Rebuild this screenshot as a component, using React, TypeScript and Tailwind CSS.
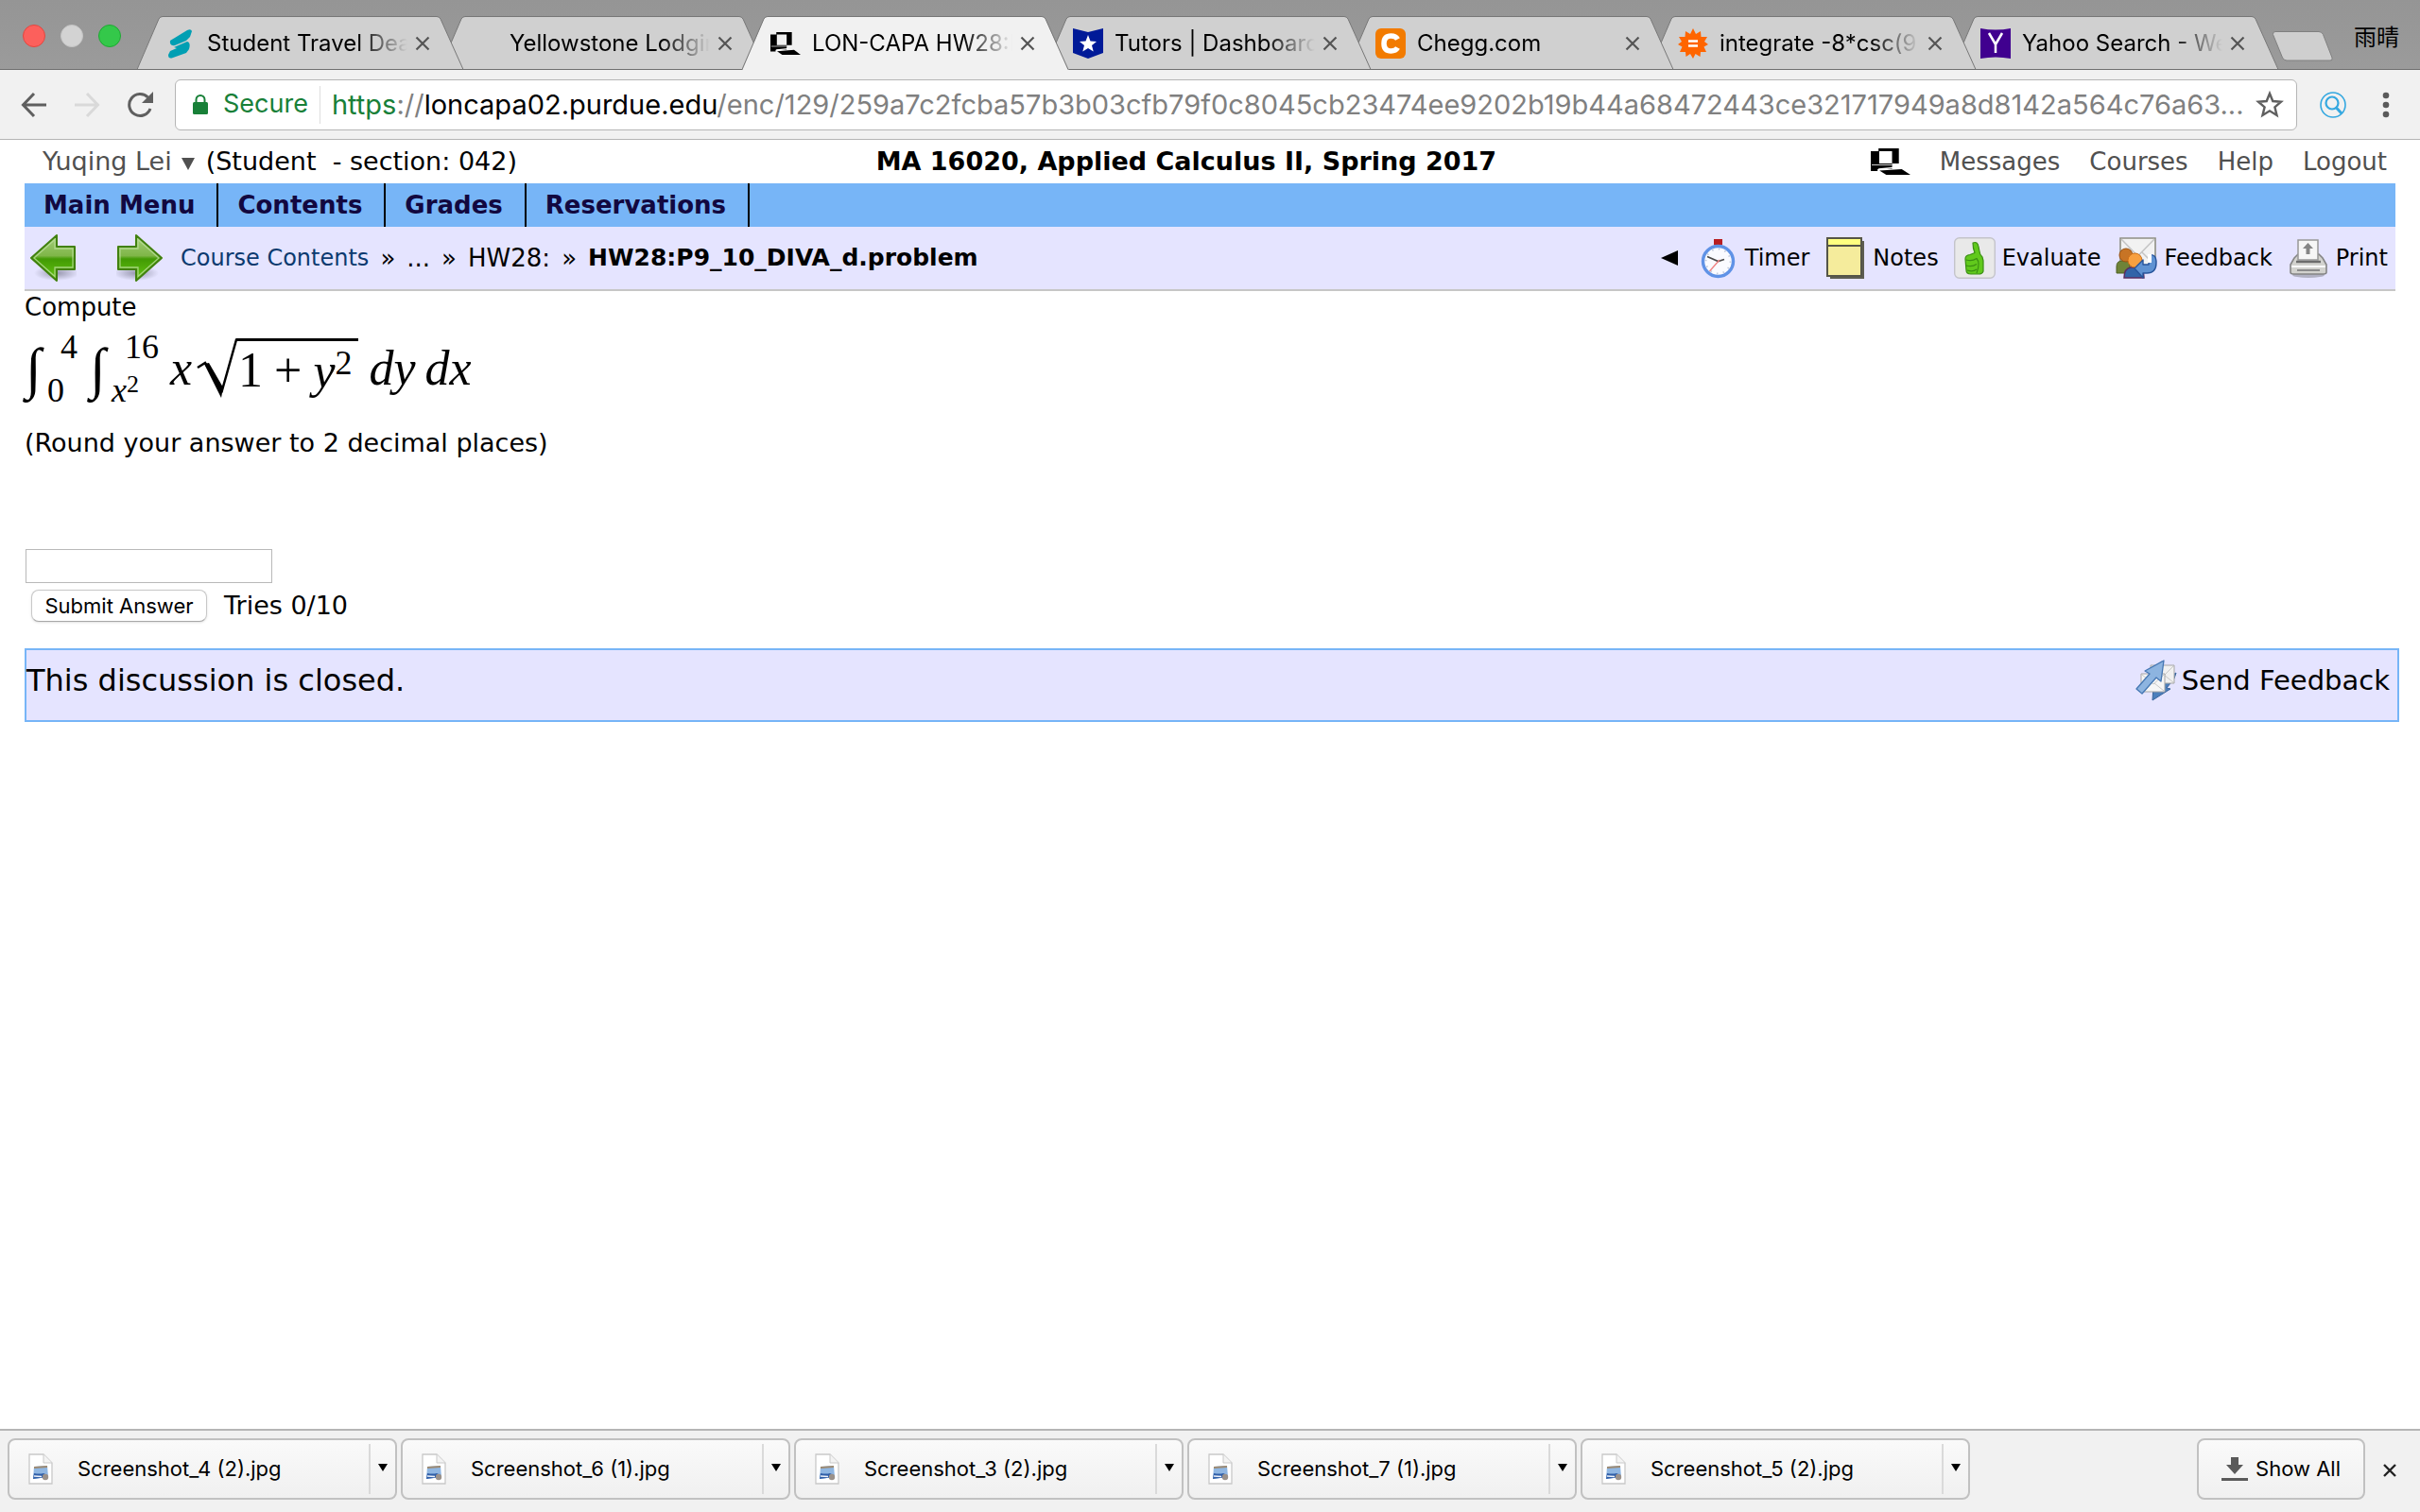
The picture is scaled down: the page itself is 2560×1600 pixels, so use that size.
import React from "react";
import type { ReactNode } from "react";

type Tab = { title: string; icon?: ReactNode; active?: boolean };

const tabs: Tab[] = [
  { title: "Student Travel Dea", icon: <StudentIcon /> },
  { title: "Yellowstone Lodgin" },
  { title: "LON-CAPA HW28:P", icon: <LonCapaIcon className="h-6 w-8" />, active: true },
  { title: "Tutors | Dashboard", icon: <TutorsIcon /> },
  { title: "Chegg.com", icon: <CheggIcon /> },
  { title: "integrate -8*csc(9", icon: <WolframIcon /> },
  { title: "Yahoo Search - We", icon: <YahooIcon /> },
];

const stacking = ["z-[7]", "z-[6]", "z-[8]", "z-[5]", "z-[4]", "z-[3]", "z-[2]"];

const menu = ["Main Menu", "Contents", "Grades", "Reservations"];

const userLinks = ["Messages", "Courses", "Help", "Logout"];

const tools = [
  { label: "Timer", icon: <TimerIcon /> },
  { label: "Notes", icon: <NotesIcon /> },
  { label: "Evaluate", icon: <EvaluateIcon /> },
  { label: "Feedback", icon: <FeedbackIcon /> },
  { label: "Print", icon: <PrintIcon /> },
];

const downloads = [
  "Screenshot_4 (2).jpg",
  "Screenshot_6 (1).jpg",
  "Screenshot_3 (2).jpg",
  "Screenshot_7 (1).jpg",
  "Screenshot_5 (2).jpg",
];

export default function App() {
  return (
    <div className="flex min-h-screen flex-col bg-white font-['Inter','Noto_Sans_CJK_SC',sans-serif] text-black">
      <TabStrip />
      <Toolbar />
      <div className="flex-1 pr-[26px] pl-[26px] font-['DejaVu_Sans',Verdana,sans-serif] text-[26px]">
        <CourseHeader />
        <Problem />
      </div>
      <DownloadShelf />
    </div>
  );
}

/* ---------------- browser chrome ---------------- */

function TabStrip() {
  return (
    <div className="flex h-[74px] items-stretch border-b border-[#6f6f6f] bg-gradient-to-b from-[#959595] to-[#9b9b9b] pr-[22px] pl-6">
      <div className="mt-[26px] mr-[17px] flex h-6 gap-4">
        <button aria-label="Close window" className="h-6 w-6 rounded-full border border-[#e2463f] bg-[#fc605c]" />
        <button aria-label="Minimize window" className="h-6 w-6 rounded-full border border-[#c4c4c4] bg-[#d3d3d3]" />
        <button aria-label="Zoom window" className="h-6 w-6 rounded-full border border-[#1fa833] bg-[#34c84a]" />
      </div>
      <ul className="mt-[17px] -mb-px flex min-w-0">
        {tabs.map((tab, i) => (
          <TabItem key={tab.title} tab={tab} z={stacking[i]} />
        ))}
      </ul>
      <button aria-label="New tab" className="mt-8 ml-[18px] h-[34px] w-[66px]">
        <svg viewBox="0 0 66 34" className="h-full w-full">
          <path d="M4 1.500H50Q53 1.500 54.500 4.500L64 29Q65 32 62 32H16Q13 32 11.500 29L1.500 4.500Q1 1.500 4 1.500Z" fill="#cfcfcf" stroke="#808080" />
        </svg>
      </button>
      <span className="mt-6 ml-auto text-2xl leading-8 whitespace-nowrap">雨晴</span>
    </div>
  );
}

function TabItem({ tab, z }: { tab: Tab; z: string }) {
  return (
    <li className={"relative flex h-[57px] w-[320px] min-w-0 items-center pl-[30px] " + z}>
      <svg viewBox="0 0 346 57" preserveAspectRatio="none" className="absolute top-0 left-0 h-[57px] w-[346px]">
        <path
          d={tab.active ? "M0 57L1 56 23 3Q24.500 .5 27 .5H317Q319.500 .5 321 3L344 56 346 57Z" : "M0 56L23 3Q24.500 .5 27 .5H317Q319.500 .5 321 3L345 56Z"}
          fill={tab.active ? "#f1f1f1" : "#d0d0d0"}
        />
        <path d="M0 56.500L23 3Q24.500 .5 27 .5H317Q319.500 .5 321 3L345 56.500" fill="none" stroke="#777" />
      </svg>
      <span className="relative flex h-8 w-8 shrink-0 items-center justify-center">{tab.icon}</span>
      <a
        href="#tab"
        className="relative ml-3 w-[212px] shrink-0 overflow-hidden bg-gradient-to-r from-black from-75% to-transparent bg-clip-text text-2xl leading-8 whitespace-nowrap text-transparent"
      >
        {tab.title}
      </a>
      <button aria-label={"Close " + tab.title} className="relative ml-2 h-4 w-4 shrink-0">
        <svg viewBox="0 0 16 16" className="h-4 w-4">
          <path d="M1.500 1.500L14.500 14.500M14.500 1.500L1.500 14.500" stroke="#555" strokeWidth="2.200" />
        </svg>
      </button>
    </li>
  );
}

function Toolbar() {
  return (
    <div className="flex h-[74px] items-center border-b border-[#b5b5b5] bg-[#f1f1f1] pr-8 pl-[22px]">
      <button aria-label="Back" className="h-7 w-7">
        <svg viewBox="0 0 28 28" className="h-7 w-7" fill="none" stroke="#5f5f5f" strokeWidth="3">
          <path d="M27 14H3M14 2L2.500 14 14 26" />
        </svg>
      </button>
      <button aria-label="Forward" className="ml-7 h-7 w-7">
        <svg viewBox="0 0 28 28" className="h-7 w-7" fill="none" stroke="#d9d9d9" strokeWidth="3">
          <path d="M1 14H25M14 2L25.500 14 14 26" />
        </svg>
      </button>
      <button aria-label="Reload" className="ml-7 h-7 w-7">
        <svg viewBox="0 0 28 28" className="h-7 w-7">
          <path d="M25 18A11.500 11.500 0 1 1 22.500 6" fill="none" stroke="#5f5f5f" strokeWidth="3" />
          <path d="M28 0V12H16Z" fill="#5f5f5f" />
        </svg>
      </button>
      <div className="ml-[23px] flex h-[54px] min-w-0 flex-1 items-center rounded-md border border-[#b5b5b5] bg-white pr-3 pl-[17px]">
        <svg viewBox="0 0 18 24" className="h-6 w-[18px] shrink-0">
          <rect x="1" y="9" width="16" height="13" rx="1.500" fill="#188038" />
          <path d="M4.500 10V6.500A4.500 4.500 0 0 1 13.500 6.500V10" fill="none" stroke="#188038" strokeWidth="2" />
        </svg>
        <span className="ml-[15px] text-[27px] text-[#188038]">Secure</span>
        <span className="mx-3 h-10 w-px shrink-0 bg-[#dedede]" />
        <span className="min-w-0 flex-1 truncate text-[29px] text-[#808080]">
          <span className="text-[#188038]">https</span>://<span className="text-black">loncapa02.purdue.edu</span>
          /enc/129/259a7c2fcba57b3b03cfb79f0c8045cb23474ee9202b19b44a68472443ce321717949a8d8142a564c76a63...
        </span>
        <button aria-label="Bookmark" className="h-8 w-8 shrink-0">
          <svg viewBox="0 0 32 32" className="h-8 w-8">
            <path d="M16 4L19.300 12 28 12.700 21.400 18.400 23.500 27 16 22.300 8.500 27 10.600 18.400 4 12.700 12.700 12Z" fill="none" stroke="#5f5f5f" strokeWidth="2.400" />
          </svg>
        </button>
      </div>
      <button aria-label="Search extension" className="ml-6 h-7 w-7">
        <svg viewBox="0 0 28 28" className="h-7 w-7" fill="none" stroke="#35a8e0">
          <circle cx="14" cy="14" r="13" strokeWidth="1.600" />
          <circle cx="13" cy="12" r="6.500" strokeWidth="2.200" />
          <path d="M17.500 17L23 23" strokeWidth="3" />
        </svg>
      </button>
      <button aria-label="Menu" className="ml-[38px] h-7 w-2">
        <svg viewBox="0 0 8 28" className="h-7 w-2" fill="#5a5a5a">
          <circle cx="4" cy="4" r="3.300" />
          <circle cx="4" cy="14" r="3.300" />
          <circle cx="4" cy="24" r="3.300" />
        </svg>
      </button>
    </div>
  );
}

function DownloadShelf() {
  return (
    <div className="flex h-[88px] items-start gap-1 border-t-2 border-[#b5b5b5] bg-[#f1f1f1] px-2 pt-2 text-[22px]">
      {downloads.map((name) => (
        <div key={name} className="flex h-[65px] w-[412px] rounded-lg border-2 border-[#c1c1c1] bg-gradient-to-b from-[#fafafa] to-[#f0f0f0]">
          <button className="flex min-w-0 flex-1 items-center pl-5">
            <FileIcon />
            <span className="ml-[26px] truncate">{name}</span>
          </button>
          <button aria-label={"Options for " + name} className="my-1 flex w-7 items-center justify-center border-l-2 border-[#dadada] pb-1">
            <svg viewBox="0 0 10 14" className="h-[14px] w-[10px]">
              <path d="M0 3H10L5 11Z" />
            </svg>
          </button>
        </div>
      ))}
      <button className="ml-auto flex h-[65px] items-center rounded-lg border-2 border-[#c1c1c1] bg-gradient-to-b from-[#fafafa] to-[#f0f0f0] px-6">
        <svg viewBox="0 0 28 26" className="h-[26px] w-7" fill="#5a5a5a">
          <path d="M10 0H18V8H23L14 18 5 8H10ZM0 22H28V25H0Z" />
        </svg>
        <span className="ml-2">Show All</span>
      </button>
      <button aria-label="Close downloads" className="mt-[26px] mr-4 ml-[14px] h-4 w-4">
        <svg viewBox="0 0 16 16" className="h-4 w-4">
          <path d="M2 2L14 14M14 2L2 14" stroke="#222" strokeWidth="2.400" />
        </svg>
      </button>
    </div>
  );
}

/* ---------------- course page ---------------- */

function CourseHeader() {
  return (
    <header>
      <div className="flex h-[46px] items-center justify-between pr-[9px] pl-[19px]">
        <div className="flex items-center text-[27px] whitespace-pre">
          <a href="#user" className="flex items-center text-[#505050]">
            Yuqing Lei
            <svg viewBox="0 0 14 14" className="mt-1 ml-[10px] h-[14px] w-[14px]" fill="#505050">
              <path d="M0 1H14L7 14Z" />
            </svg>
          </a>
          <span className="ml-3">(Student  - section: 042)</span>
        </div>
        <h1 className="mr-4 text-[27px] font-bold">MA 16020, Applied Calculus II, Spring 2017</h1>
        <nav className="flex items-center gap-[31px] text-[#505050]">
          <LonCapaIcon className="h-7 w-[42px]" />
          {userLinks.map((link) => (
            <a key={link} href="#user">{link}</a>
          ))}
        </nav>
      </div>
      <nav className="flex h-[46px] bg-[#77b5f7] font-bold text-[#120840]">
        {menu.map((item) => (
          <a key={item} href="#menu" className="flex items-center border-r-2 border-black pr-[23px] pl-5">{item}</a>
        ))}
      </nav>
      <div className="flex h-[68px] items-center border-b-2 border-[#c6c6c6] bg-[#e5e4ff] pr-2 pl-[5px]">
        <a href="#previous" aria-label="Previous"><ArrowIcon /></a>
        <a href="#next" aria-label="Next" className="ml-[42px]"><ArrowIcon flip /></a>
        <div className="ml-[18px] flex items-center gap-3">
          <a href="#contents" className="text-2xl text-[#0b3a6f]">Course Contents</a>
          <span>»</span>
          <span>...</span>
          <span>»</span>
          <span>HW28:</span>
          <span>»</span>
          <b className="text-[25px]">HW28:P9_10_DIVA_d.problem</b>
        </div>
        <div className="ml-auto flex items-center gap-4 text-2xl">
          <button aria-label="Collapse tools" className="mr-1">
            <svg viewBox="0 0 18 16" className="h-4 w-[18px]">
              <path d="M18 0V16L0 8Z" />
            </svg>
          </button>
          {tools.map((tool) => (
            <a key={tool.label} href="#tool" className="flex items-center gap-[7px]">
              {tool.icon}
              {tool.label}
            </a>
          ))}
        </div>
      </div>
    </header>
  );
}

function Problem() {
  return (
    <main className="pt-px">
      <p className="leading-8">Compute</p>
      <Formula />
      <p className="mt-5 text-[27px] leading-8">(Round your answer to 2 decimal places)</p>
      <form onSubmit={(e) => e.preventDefault()}>
        <input aria-label="Answer" className="mt-24 ml-px block h-9 w-[261px] border border-[#b9b9b9] bg-white px-1" />
        <div className="mt-1 ml-[7px] flex items-center gap-[18px]">
          <button className="h-[34px] w-[186px] rounded-lg border border-[#c8c8c8] border-b-[#a8a8a8] bg-white font-['Inter',sans-serif] text-[22px] leading-7 shadow-sm">
            Submit Answer
          </button>
          <span className="text-[27px]">Tries 0/10</span>
        </div>
      </form>
      <div className="mt-6 -mr-1 flex items-center justify-between border-2 border-[#77b5f7] bg-[#e5e4ff] pt-[10px] pr-2 pb-5 text-[32px] leading-[44px]">
        <span>This discussion is closed.</span>
        <a href="#feedback" className="flex items-center gap-[5px] text-[29px]">
          <SendIcon />
          Send Feedback
        </a>
      </div>
    </main>
  );
}

function Integral({ upper, lower }: { upper: ReactNode; lower: ReactNode }) {
  return (
    <span className="mr-3 flex items-center pl-px">
      <span className="w-[23px] font-['Liberation_Serif',serif] text-[60px] italic">∫</span>
      <span className="flex h-[82px] flex-col justify-between text-4xl leading-9">
        <span className="pl-[14px]">{upper}</span>
        <span>{lower}</span>
      </span>
    </span>
  );
}

function Formula() {
  return (
    <div className="mt-[6px] flex h-[86px] items-center font-['Liberation_Serif','Times_New_Roman',serif] text-[52px] leading-[52px]">
      <Integral upper="4" lower="0" />
      <Integral
        upper="16"
        lower={<><i>x</i><sup className="static align-[10px] text-[26px]">2</sup></>}
      />
      <i>x</i>
      <svg viewBox="0 0 46 64" className="ml-[5px] h-16 w-[46px]">
        <path d="M1 31L9 26 27 55 42 1.500H46" fill="none" stroke="#000" strokeWidth="2.500" />
        <path d="M8 27L13 26 28 52 26 63Z" />
      </svg>
      <span className="-ml-1 flex h-16 items-center border-t-[3px] border-black pr-[6px] pl-[2px]">
        <span>1</span>
        <span className="mx-3">+</span>
        <span className="whitespace-nowrap"><i>y</i><sup className="static align-[14px] text-4xl">2</sup></span>
      </span>
      <i className="ml-[12px]">dy</i>
      <i className="ml-[10px]">dx</i>
    </div>
  );
}

/* ---------------- icons ---------------- */

function StudentIcon() {
  return (
    <svg viewBox="0 0 32 32" className="h-8 w-8" fill="#009fb3">
      <path d="M5 13L23 2Q27 0 28 3L26 9 22 13 10 18Q4 19 5 13Z" />
      <path d="M9 20L23 14Q27 15 25 22L22 26 8 31Q3 33 3 28L5 24 12 21Z" />
    </svg>
  );
}

function LonCapaIcon({ className }: { className: string }) {
  return (
    <svg viewBox="0 0 41 28" className={className} preserveAspectRatio="none">
      <path d="M8 0H29V16H22V22H7V24H0V3H8ZM8.700 3V16H22V3Z" fillRule="evenodd" />
      <path d="M1 17.500H22" stroke="#fff" strokeWidth=".8" />
      <path d="M8 22L24 20.500" stroke="#fff" strokeWidth="1.500" />
      <path d="M9 23.500L32 22 41 28H16Z" />
    </svg>
  );
}

function TutorsIcon() {
  return (
    <svg viewBox="0 0 32 32" className="h-8 w-8">
      <path d="M0 0L16 4 32 0V26L16 32 0 26Z" fill="#001a98" />
      <path d="M16 7L18.500 13.500 25 14 20 18 21.700 24.500 16 21 10.300 24.500 12 18 7 14 13.500 13.500Z" fill="#fff" />
    </svg>
  );
}

function CheggIcon() {
  return (
    <svg viewBox="0 0 32 32" className="h-8 w-8">
      <rect width="32" height="32" rx="6" fill="#f27b00" />
      <path d="M23.500 11.500Q21.500 8 16.500 8 9 8 9 16T16.500 24Q21.500 24 23.500 20.500" fill="none" stroke="#fff" strokeWidth="5.500" />
    </svg>
  );
}

function WolframIcon() {
  return (
    <svg viewBox="0 0 32 32" className="h-8 w-8">
      <path d="M16 0L19 6 24 3 24.500 9 31 9 28 14 32 17 27.500 19.500 30 25 24 25 23.500 30 18.500 27 16 32 13 27 8.500 30 8 25 2 25 4.500 19.500 0 17 4 14 1 9 7.500 9 8 3 13 6Z" fill="#ff6500" />
      <path d="M11 13.500H21M11 18.500H21" stroke="#fff" strokeWidth="2.600" />
    </svg>
  );
}

function YahooIcon() {
  return (
    <svg viewBox="0 0 32 32" className="h-8 w-8">
      <path d="M0 0Q16 3 32 0V32Q16 29 0 32Z" fill="#40008f" />
      <path d="M9 5L16 17 23 5M16 17V26" fill="none" stroke="#fff" strokeWidth="2.500" />
    </svg>
  );
}

function ArrowIcon({ flip }: { flip?: boolean }) {
  return (
    <svg viewBox="0 0 50 52" className={flip ? "h-[52px] w-[50px] -scale-x-100" : "h-[52px] w-[50px]"}>
      <defs>
        <linearGradient id="arrow" x1="0" y1="0" x2="0" y2="1">
          <stop offset="0" stopColor="#a5cf7c" />
          <stop offset=".45" stopColor="#7fb648" />
          <stop offset=".52" stopColor="#429a04" />
          <stop offset="1" stopColor="#67c713" />
        </linearGradient>
        <radialGradient id="arrowShade">
          <stop offset="0" stopColor="#77778c" stopOpacity=".7" />
          <stop offset="1" stopColor="#77778c" stopOpacity="0" />
        </radialGradient>
      </defs>
      <ellipse cx="29" cy="42" rx="24" ry="8" fill="url(#arrowShade)" />
      <path d="M2 26L29 2V14H48V38H29V50Z" fill="url(#arrow)" stroke="#41810f" strokeWidth="2" strokeLinejoin="round" />
      <path d="M5 26L27 6.500V16H46V36H27V45.500Z" fill="none" stroke="#b9dd98" strokeWidth="1.300" opacity=".8" />
    </svg>
  );
}

function TimerIcon() {
  return (
    <svg viewBox="0 0 44 44" className="h-11 w-11">
      <path d="M18 2H27V8H18Z" fill="#b81d22" />
      <path d="M18 8H27V11H18Z" fill="#b9bcc8" />
      <circle cx="22.500" cy="25.500" r="16" fill="#fafbff" stroke="#5f92e6" strokeWidth="3.400" />
      <circle cx="22.500" cy="25.500" r="13" fill="none" stroke="#c3cbdc" strokeWidth="2" strokeDasharray="1.500 5.300" />
      <path d="M11 20.500L22.500 25.500 29 23.500" fill="none" stroke="#4b4b4b" strokeWidth="1.700" />
      <path d="M24 24L13.500 36" stroke="#f08080" strokeWidth="1.400" />
    </svg>
  );
}

function NotesIcon() {
  return (
    <svg viewBox="0 0 44 44" className="h-11 w-11">
      <path d="M6 4H42V44H6Z" fill="#5d5d52" />
      <path d="M3 1H39V41H3Z" fill="#f5ec9c" stroke="#555548" strokeWidth="2" />
      <path d="M4 2H38V8H4Z" fill="#ffff80" />
      <path d="M3 9H39" stroke="#555548" strokeWidth="2" />
    </svg>
  );
}

function EvaluateIcon() {
  return (
    <svg viewBox="0 0 44 44" className="h-11 w-11">
      <rect x=".7" y=".7" width="42.600" height="42.600" rx="5" fill="#e9e9e9" stroke="#c4c4ca" strokeWidth="1.400" />
      <g fill="#61c91c" stroke="#3a8f12" strokeWidth="1.200" strokeLinejoin="round">
        <path d="M20 6Q25 4 26 10L27 15Q27 18 30 21L31 25V36Q30 39 26 39H18Q13 39 13 35L12 23Q12 19 17 18.500L22 16.500Q20 12 20 6Z" />
        <path d="M13 24Q19 26 24 22.500M13 30Q19 32 24 28.500M14 35Q20 37 24 34M24 22.500Q28 27 24 38" fill="none" />
      </g>
    </svg>
  );
}

function FeedbackIcon() {
  return (
    <svg viewBox="0 0 44 44" className="h-11 w-11">
      <path d="M5 1H42V31H5Z" fill="#f2f2f2" stroke="#8f8f84" strokeWidth="1.600" />
      <path d="M6 2L23.500 20 41 2M28 16L41 29" fill="none" stroke="#c4c4c4" strokeWidth="1.500" />
      <path d="M1 31Q1 25 7 25H14L16 38H1Z" fill="#6e8338" stroke="#4d5e20" />
      <circle cx="11" cy="19" r="7" fill="#c77425" stroke="#995010" />
      <path d="M9 43Q9 33 16 32H24Q30 33 30 43Z" fill="#3164a8" stroke="#5a2c60" strokeWidth="1.500" />
      <circle cx="20.500" cy="24.500" r="7.500" fill="#f7a040" stroke="#cd6e14" />
      <path d="M20 33L29 24V29H35V19Q43 17 43 27 43 38 33 38H29V43Z" fill="#5f92d2" stroke="#27549b" strokeWidth="1.400" strokeLinejoin="round" />
      <path d="M34 18V27H38V18" fill="#fff" />
    </svg>
  );
}

function PrintIcon() {
  return (
    <svg viewBox="0 0 44 44" className="h-11 w-11">
      <ellipse cx="22" cy="40" rx="17" ry="3" fill="#9a9aa8" opacity=".7" />
      <path d="M7 22L11 18H33L37 22 41 29V37Q41 39 38 39H6Q3 39 3 37V29Z" fill="#d2d2ce" stroke="#858585" strokeWidth="1.600" />
      <path d="M11 3H32V24H11Z" fill="#f6f6f6" stroke="#989898" strokeWidth="1.500" />
      <path d="M21.500 6L27 12H23.500V18H19.500V12H16Z" fill="#858585" />
      <path d="M9 26H35" stroke="#6c6c6c" strokeWidth="2.400" />
      <path d="M4 31H40" stroke="#fafafa" strokeWidth="2" />
      <path d="M10 35H34" stroke="#8b8b8b" strokeWidth="2" />
    </svg>
  );
}

function SendIcon() {
  return (
    <svg viewBox="0 0 44 44" className="h-11 w-11" strokeLinejoin="round">
      <path d="M18 43L19 28 43 14 41 20 33 30 37 31Z" fill="#4c7fbb" stroke="#38649c" />
      <path d="M16 6H41V25H16Z" fill="#f1f1f1" stroke="#a5a5a5" />
      <path d="M17 7L29 18 40 7M30 16L40 24" fill="none" stroke="#c8c8c8" />
      <path d="M6 15H31V34H6Z" fill="#f6f6f6" stroke="#a5a5a5" />
      <path d="M7 16L19 26 30 16M20 25L30 33" fill="none" stroke="#c8c8c8" />
      <path d="M1 31L15 15 10 12 30 1 27 23 22 19 7 36Z" fill="#8db4e0" stroke="#4577b3" strokeWidth="1.300" />
    </svg>
  );
}

function FileIcon() {
  return (
    <svg viewBox="0 0 26 34" className="h-[34px] w-[26px] shrink-0">
      <path d="M1 1H16L25 10V32H1Z" fill="#fff" stroke="#c9c9c9" strokeWidth="1.300" />
      <path d="M16 1V10H25" fill="#f3f3f3" stroke="#c9c9c9" />
      <path d="M6 14L20 13 21 25 5 27Z" fill="#8fb6e2" />
      <path d="M6 14L20 13V15L6 16Z" fill="#9d8a72" />
      <path d="M6 21Q12 22 16 21L20 23 20 25 5 27Z" fill="#2f5ea8" />
      <path d="M6 24L14 24.500" stroke="#eef3fa" strokeWidth="1.500" />
      <circle cx="18" cy="25" r="3.200" fill="#9a918a" />
    </svg>
  );
}
